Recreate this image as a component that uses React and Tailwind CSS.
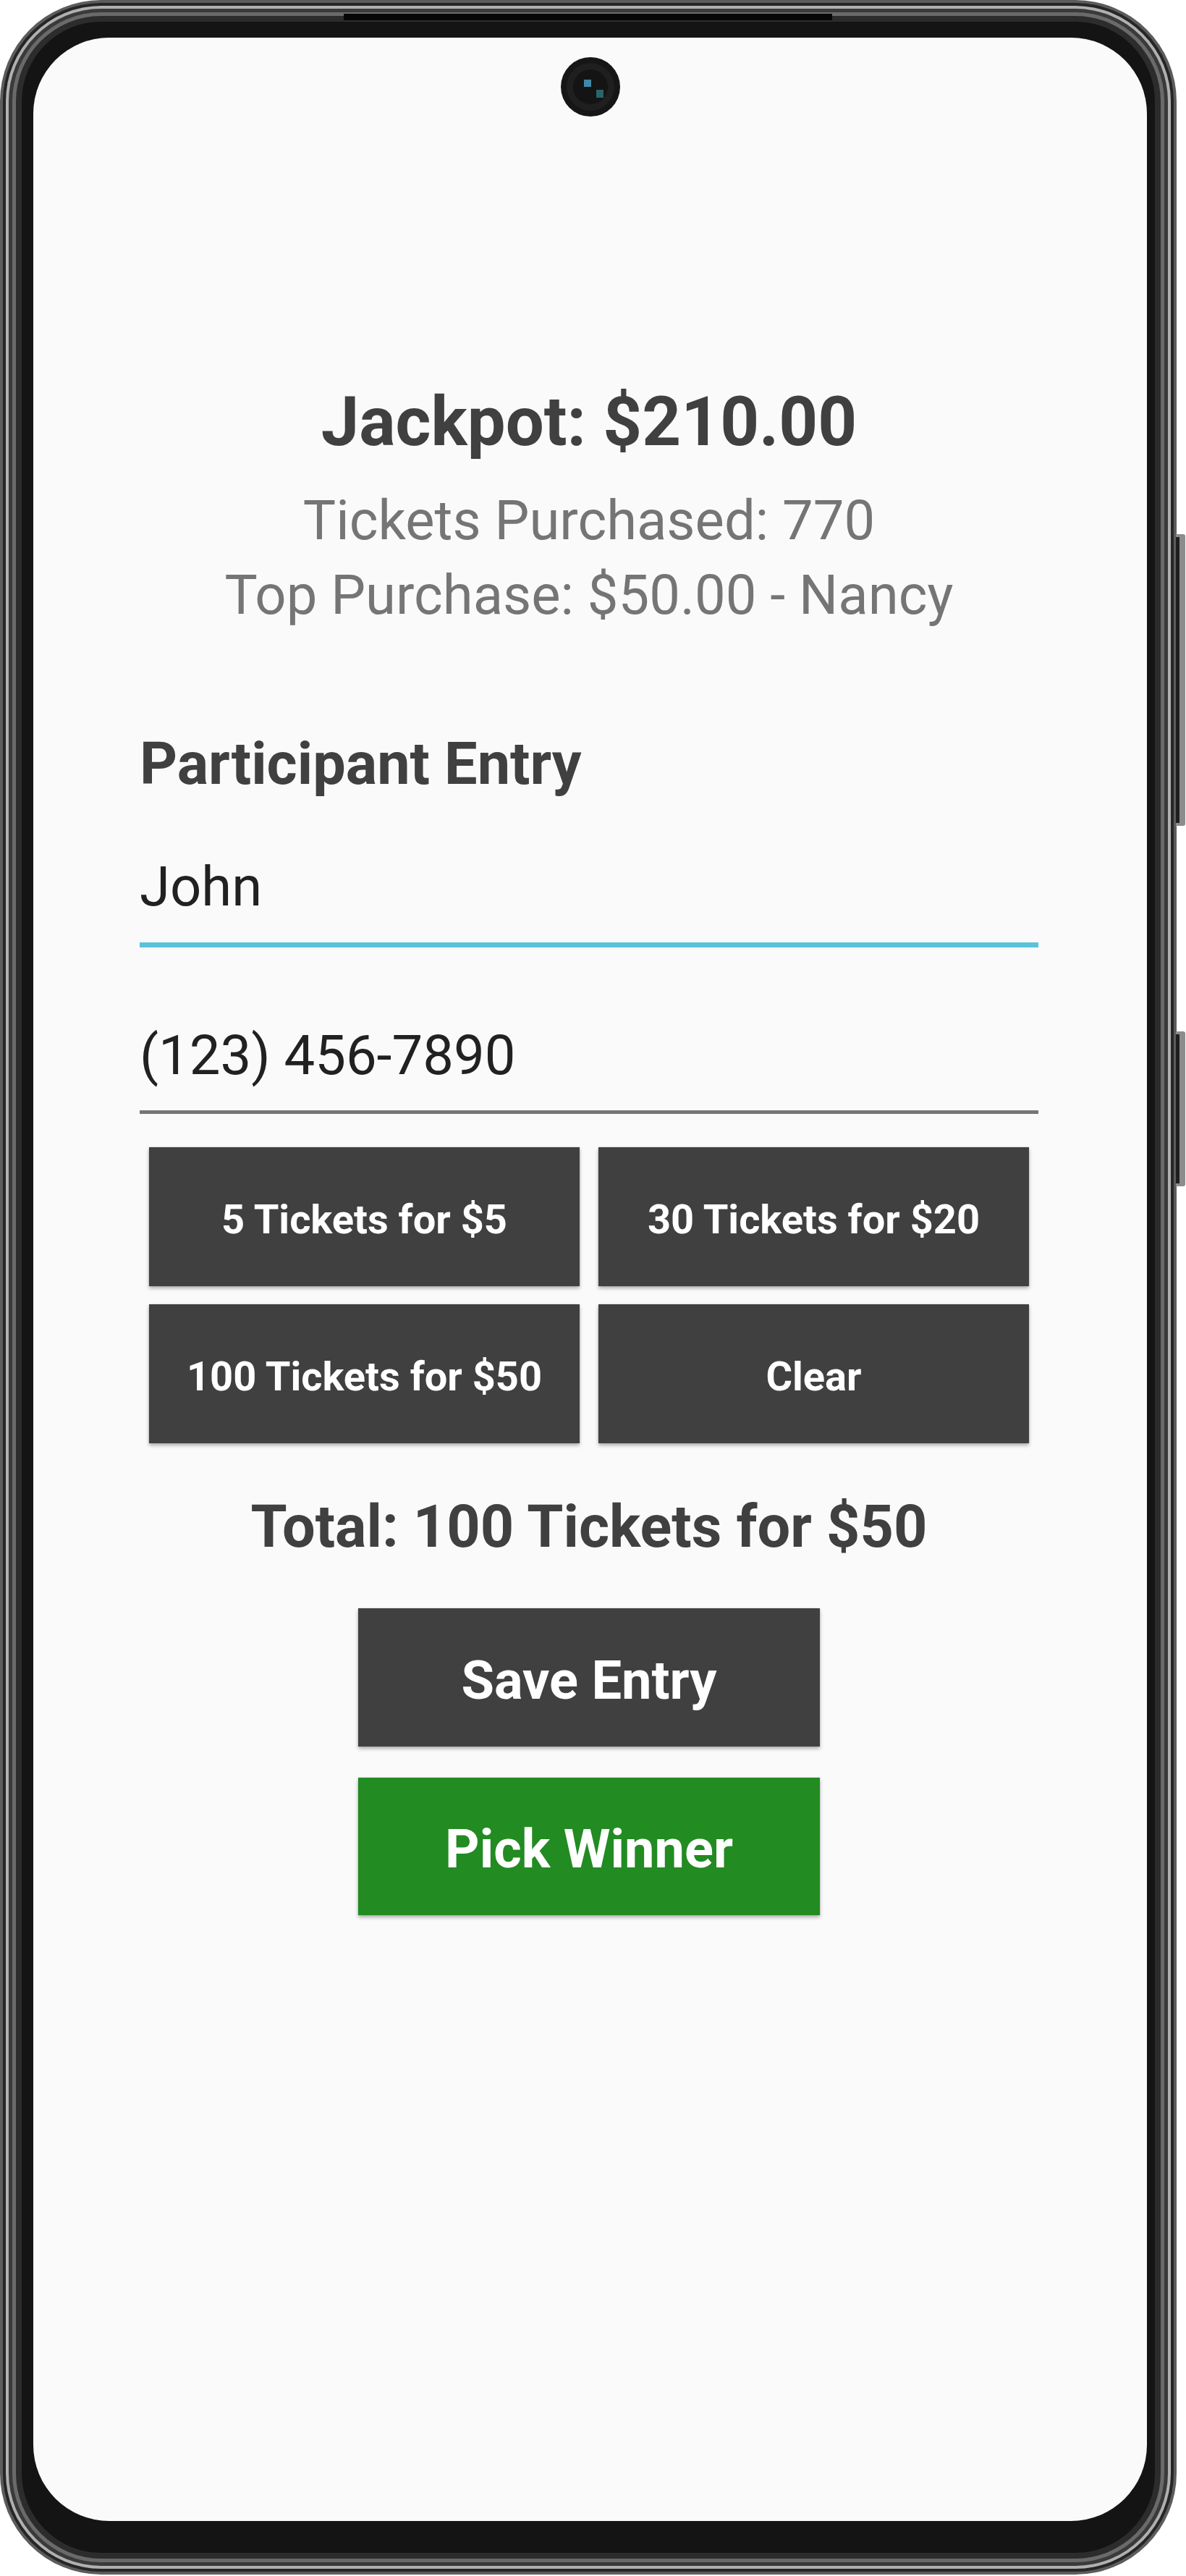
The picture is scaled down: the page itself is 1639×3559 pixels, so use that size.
export default function App() {
  return (
    <div className="relative w-[1639px] h-[3559px] bg-white overflow-hidden font-['Roboto',sans-serif]">
      {/* phone frame */}
      <div className="flex w-[1626px] h-[3557px] rounded-[140px] bg-[#5c5c5c] p-[4px]">
        <div className="flex flex-1 rounded-[136px] bg-[#262626] p-[4px]">
          <div className="flex flex-1 rounded-[132px] bg-[#b0b0b0] p-[4px]">
            <div className="flex flex-1 rounded-[128px] bg-[#3a3a3a] p-[5px]">
              <div className="flex flex-1 rounded-[123px] bg-[#6a6a6a] p-[5px]">
                <div className="flex flex-1 rounded-[118px] bg-[#2c2c2c] p-[8px]">
                  <div className="flex flex-1 rounded-[110px] bg-[#141414] pt-[22px] pb-[44px] pl-[16px] pr-[11px]">
                    <Screen />
                  </div>
                </div>
              </div>
            </div>
          </div>
        </div>
      </div>

      {/* top slot */}
      <div className="absolute left-[475px] top-[19px] w-[675px] h-[9px] bg-[#060606]" />

      {/* side buttons */}
      <SideButton className="top-[738px] h-[403px]" />
      <SideButton className="top-[1425px] h-[214px]" />
    </div>
  );
}

function SideButton({ className }) {
  return (
    <div className={"absolute left-[1625px] w-[13px] flex rounded-r-[3px] bg-[#8c8c8c] py-[4px] " + className}>
      <div className="w-[5px] bg-[#1f1f1f]" />
    </div>
  );
}

function Screen() {
  return (
    <div className="relative flex flex-1 flex-col rounded-[105px] bg-[#fafafa] overflow-hidden">
      {/* camera */}
      <div className="absolute left-1/2 top-[26px] -translate-x-1/2 w-[84px] h-[84px]">
        <svg viewBox="0 0 84 84" width="84" height="84">
          <circle cx="42" cy="42" r="41" fill="#161616" />
          <circle cx="42" cy="42" r="33" fill="#1f1f1f" />
          <circle cx="42" cy="42" r="24" fill="#141414" />
          <rect x="33" y="32" width="10" height="10" fill="#4a9cc0" opacity="0.85" />
          <rect x="50" y="46" width="10" height="11" fill="#2c6e72" opacity="0.9" />
        </svg>
      </div>

      <div className="flex flex-col ml-[147px] w-[1242px] pt-[484px]">
        <div className="text-center text-[94px] leading-[94px] font-bold text-[#404040]">
          Jackpot: $210.00
        </div>
        <div className="mt-[51px] text-center text-[76px] leading-[76px] text-[#757575]">
          Tickets Purchased: 770
        </div>
        <div className="mt-[27px] text-center text-[76px] leading-[76px] text-[#757575]">
          Top Purchase: $50.00 - Nancy
        </div>

        <div className="mt-[155px] text-[81px] leading-[81px] font-bold text-[#404040]">
          Participant Entry
        </div>

        <div className="mt-[91px] text-[76px] leading-[76px] text-[#212121]">John</div>
        <div className="mt-[39px] h-[7px] bg-[#5bc2dc]" />

        <div className="mt-[111px] text-[76px] leading-[76px] text-[#212121]">(123) 456-7890</div>
        <div className="mt-[38px] h-[5px] bg-[#767676]" />

        <div className="mt-[46px] px-[13px] grid grid-cols-2 gap-x-[26px] gap-y-[25px]">
          <TicketButton>5 Tickets for $5</TicketButton>
          <TicketButton>30 Tickets for $20</TicketButton>
          <TicketButton>100 Tickets for $50</TicketButton>
          <TicketButton>Clear</TicketButton>
        </div>

        <div className="mt-[75px] text-center text-[81px] leading-[81px] font-bold text-[#404040]">
          Total: 100 Tickets for $50
        </div>

        <div className="mt-[72px] flex flex-col items-center gap-[43px]">
          <button className="w-[638px] h-[191px] pt-[8px] bg-[#404040] text-white text-[74px] font-bold shadow-[0_3px_5px_rgba(0,0,0,0.3),0_0_2px_rgba(0,0,0,0.15)]">
            Save Entry
          </button>
          <button className="w-[638px] h-[190px] pt-[6px] bg-[#228b22] text-white text-[74px] font-bold shadow-[0_3px_5px_rgba(0,0,0,0.3),0_0_2px_rgba(0,0,0,0.15)]">
            Pick Winner
          </button>
        </div>
      </div>
    </div>
  );
}

function TicketButton({ children }) {
  return (
    <button className="h-[192px] pt-[7px] bg-[#404040] text-white text-[56px] font-bold shadow-[0_3px_5px_rgba(0,0,0,0.3),0_0_2px_rgba(0,0,0,0.15)]">
      {children}
    </button>
  );
}
